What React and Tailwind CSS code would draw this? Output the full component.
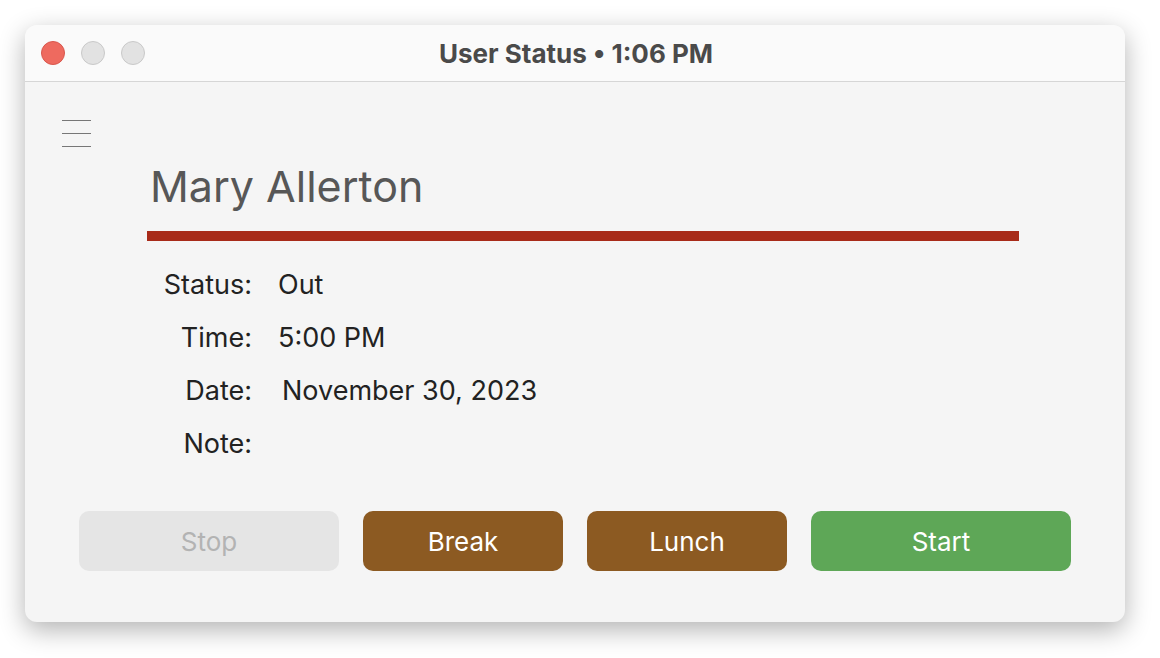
export default function App() {
  const rows = [
    { label: "Status:", value: "Out" },
    { label: "Time:", value: "5:00 PM" },
    { label: "Date:", value: "November 30, 2023", shift: true },
    { label: "Note:", value: "" },
  ];

  return (
    <div
      className="w-[1160px] h-[658px] bg-white p-[25px]"
      style={{ fontFamily: "Inter, 'Noto Sans', sans-serif" }}
    >
      <div className="w-[1100px] h-[597px] rounded-[12px] bg-[#f5f5f5] shadow-[0_8px_26px_rgba(0,0,0,0.3)] overflow-hidden flex flex-col">
        {/* title bar */}
        <div className="relative h-[57px] shrink-0 bg-[#fafafa] border-b border-[#d6d6d6] flex items-center justify-center">
          <div className="absolute left-[16px] top-[16px] flex gap-[16px]">
            <div className="w-[24px] h-[24px] rounded-full bg-[#ee6a5f] border border-[#d9574d]" />
            <div className="w-[24px] h-[24px] rounded-full bg-[#e2e2e2] border border-[#c9c9c9]" />
            <div className="w-[24px] h-[24px] rounded-full bg-[#e2e2e2] border border-[#c9c9c9]" />
          </div>
          <div className="text-[26px] font-bold text-[#4a4a4a] pl-[2px]">
            User Status • 1:06 PM
          </div>
        </div>

        {/* body */}
        <div className="flex flex-col pl-[37px] pt-[38px]">
          <div className="flex flex-col gap-[12px] w-[29px]">
            <div className="h-px bg-[#777]" />
            <div className="h-px bg-[#777]" />
            <div className="h-px bg-[#777]" />
          </div>

          <div className="ml-[85px] w-[872px] mt-[17px]">
            <div className="text-[43px] leading-[44px] text-[#575757] pl-[3px]">
              Mary Allerton
            </div>
            <div className="mt-[23px] h-[10px] bg-[#a82b19]" />
          </div>

          <div className="mt-[18px] flex flex-col ml-[90px]">
            {rows.map((r) => (
              <div key={r.label} className="h-[53px] flex items-center text-[27px] text-[#222]">
                <div className="w-[100px] text-right">{r.label}</div>
                <div className={r.shift ? "ml-[30px]" : "ml-[26px]"}>{r.value}</div>
              </div>
            ))}
          </div>
        </div>

        <div className="mt-[40px] px-[54px] flex gap-[24px] text-[26px]">
          <button className="w-[260px] h-[60px] rounded-[10px] bg-[#e5e5e5] text-[#b3b3b3]">
            Stop
          </button>
          <button className="w-[200px] h-[60px] rounded-[10px] bg-[#8c5a22] text-white">
            Break
          </button>
          <button className="w-[200px] h-[60px] rounded-[10px] bg-[#8c5a22] text-white">
            Lunch
          </button>
          <button className="w-[260px] h-[60px] rounded-[10px] bg-[#5ea757] text-white">
            Start
          </button>
        </div>
      </div>
    </div>
  );
}
